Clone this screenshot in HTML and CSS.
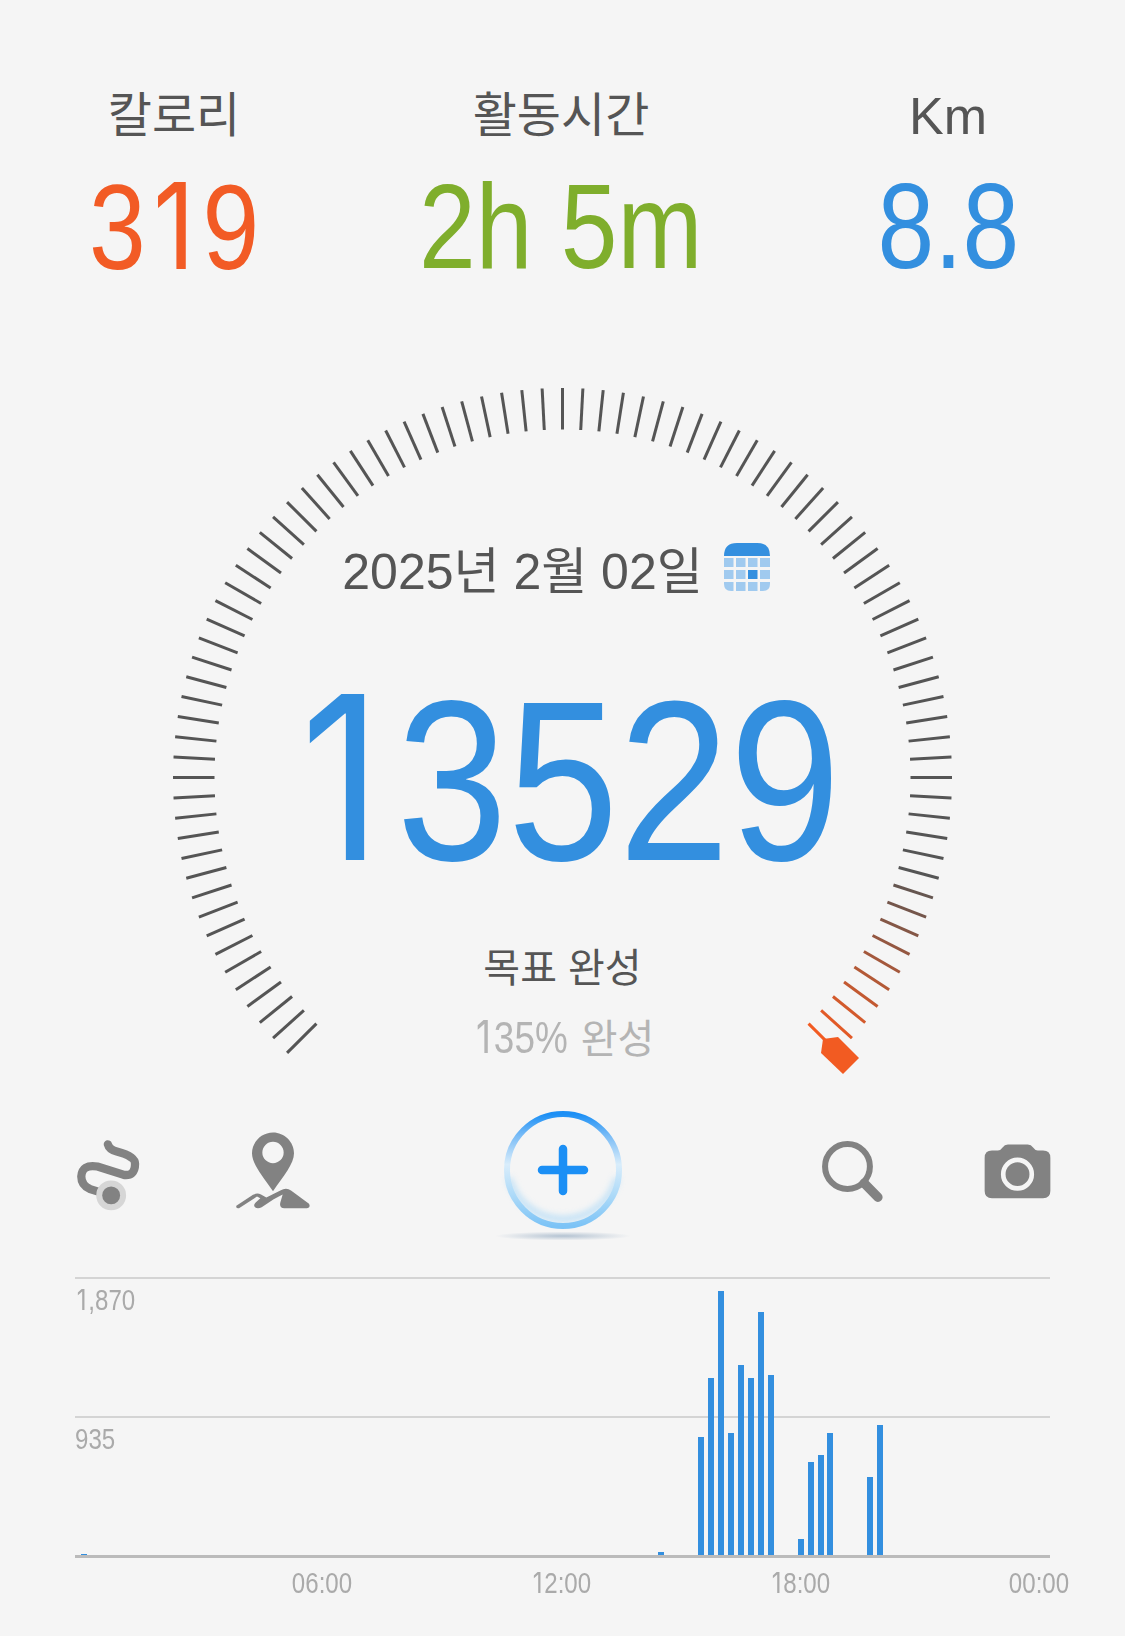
FILE: index.html
```html
<!DOCTYPE html>
<html lang="ko">
<head>
    <meta charset="UTF-8">
    <meta name="viewport" content="width=device-width, initial-scale=1.0">
    <title>걸음 수</title>
    <link rel="stylesheet" href="styles.css">
</head>
<body>
    <section class="stats">
        <div class="stat">
            <div class="stat-label">칼로리</div>
            <div class="stat-value calories">3<span class="one">1</span>9</div>
        </div>
        <div class="stat">
            <div class="stat-label">활동시간</div>
            <div class="stat-value active-time">2h 5m</div>
        </div>
        <div class="stat">
            <div class="stat-label latin">Km</div>
            <div class="stat-value distance">8.8</div>
        </div>
    </section>

    <section class="gauge">
        <svg class="gauge-dial" width="1125" height="710" viewBox="0 380 1125 710">
            <g id="ticks"></g>
            <polygon class="gauge-tag" points="823,1039 838,1037 859,1058 843,1074 821,1053"/>
        </svg>
        <div class="gauge-date">
            <span>2025년 2월 02일</span>
            <svg class="calendar-icon" width="46" height="48" viewBox="0 0 46 48">
                <path class="cal-head" d="M0 13 Q0 0 13 0 H33 Q46 0 46 13 Z"/>
                <path class="cal-cell" d="M0 15 H9.5 V24 H0 Z M12 15 H21.5 V24 H12 Z M24 15 H33.5 V24 H24 Z M36 15 H46 V24 H36 Z"/>
                <path class="cal-cell" d="M0 27 H9.5 V36 H0 Z M12 27 H21.5 V36 H12 Z M36 27 H46 V36 H36 Z"/>
                <rect class="cal-today" x="24" y="27" width="9.5" height="9"/>
                <path class="cal-cell" d="M0 39 H9.5 V48 H7 Q0 48 0 41 Z M12 39 H21.5 V48 H12 Z M24 39 H33.5 V48 H24 Z M36 39 H46 V41 Q46 48 39 48 H36 Z"/>
            </svg>
        </div>
        <div class="gauge-steps"><span class="one">1</span>3529</div>
        <div class="gauge-goal">목표 완성</div>
        <div class="gauge-percent"><span class="percent-num"><span class="one">1</span>35%</span> 완성</div>
    </section>

    <section class="toolbar">
        <div class="tool">
            <svg width="73" height="87" viewBox="35 80 220 260">
                <path class="icon-line" d="M143 131 Q147 147 170 153 Q225 167 225 190 Q225 228 190 223 L112 198 Q65 190 63 228 Q63 255 90 266 L150 285"/>
                <circle class="icon-halo" cx="153" cy="285" r="45"/>
                <circle class="icon-fill" cx="153" cy="285" r="27"/>
            </svg>
        </div>
        <div class="tool">
            <svg width="80" height="87" viewBox="518 80 240 260">
                <path class="icon-fill" fill-rule="evenodd" d="M638 96 C672 96 701 124 701 158 C701 190 670 225 638 272 C606 225 575 190 575 158 C575 124 604 96 638 96 Z M638 124 A32 32 0 1 0 638 188 A32 32 0 1 0 638 124 Z"/>
                <path class="icon-fill" d="M528 316 L578 283 Q590 276 602 282 L618 291 L660 270 Q678 260 692 270 L746 310 Q752 322 740 323 H672 Q656 322 660 306 L667 282 L640 296 L604 320 Q592 326 584 320 Q578 314 586 306 L600 293 L590 288 L536 323 Q526 324 528 316 Z"/>
            </svg>
        </div>
        <div class="tool">
            <svg width="160" height="160" viewBox="0 0 160 160">
                <defs>
                    <linearGradient id="ringGrad" x1="0" y1="0" x2="0" y2="1">
                        <stop offset="0" stop-color="#1b8ff5"/>
                        <stop offset="0.2" stop-color="#7cbdf6"/>
                        <stop offset="0.45" stop-color="#d9edfb"/>
                        <stop offset="0.75" stop-color="#a9d8f8"/>
                        <stop offset="1" stop-color="#7cc3f6"/>
                    </linearGradient>
                    <radialGradient id="shadowGrad">
                        <stop offset="0" stop-color="#b4c3d2"/>
                        <stop offset="1" stop-color="#f5f5f5"/>
                    </radialGradient>
                    <filter id="soft" x="-20%" y="-20%" width="140%" height="140%">
                        <feGaussianBlur stdDeviation="0.6"/>
                    </filter>
                    <filter id="glow" x="-30%" y="-30%" width="160%" height="160%">
                        <feGaussianBlur stdDeviation="3"/>
                    </filter>
                </defs>
                <ellipse cx="80" cy="146" rx="68" ry="4.5" fill="url(#shadowGrad)"/>
                <path class="plus-glow" d="M26 88 A56 56 0 0 0 134 88" filter="url(#glow)"/>
                <circle class="plus-ring" cx="80" cy="80" r="56" filter="url(#soft)"/>
                <path class="plus-mark" d="M80 59 V101 M59 80 H101"/>
            </svg>
        </div>
        <div class="tool">
            <svg width="67" height="87" viewBox="57 50 200 260">
                <circle class="icon-stroke" cx="142" cy="168" r="67"/>
                <path class="icon-handle" d="M192 218 L233 260"/>
            </svg>
        </div>
        <div class="tool">
            <svg width="73" height="87" viewBox="541 50 220 260">
                <path class="icon-fill" d="M574 120 H592 Q600 120 606 111 Q612 102 622 102 H682 Q692 102 698 111 Q704 120 712 120 H728 Q750 120 750 142 V242 Q750 264 728 264 H574 Q552 264 552 242 V142 Q552 120 574 120 Z"/>
                <circle class="icon-lens" cx="651" cy="191" r="43"/>
            </svg>
        </div>
    </section>

    <section class="chart">
        <div class="chart-row"><span class="chart-label"><span class="one">1</span>,870</span></div>
        <div class="chart-row"><span class="chart-label">935</span></div>
        <div class="chart-bars" id="bars"></div>
    </section>
    <div class="chart-times">
        <span>06:00</span>
        <span><span class="one">1</span>2:00</span>
        <span><span class="one">1</span>8:00</span>
        <span>00:00</span>
    </div>

    <script src="script.js"></script>
</body>
</html>
```

FILE: styles.css
```css
* {
    margin: 0;
    padding: 0;
    box-sizing: border-box;
}

body {
    width: 1125px;
    height: 1636px;
    overflow: hidden;
    background: #f5f5f5;
    color: #555;
    font-family: 'Liberation Sans', 'Noto Sans CJK KR', sans-serif;
}

/* Liberation's 1 has a foot, the design's doesn't */
.one {
    display: inline-block;
    width: 0.556em;
    font-family: Inter, sans-serif;
    text-align: center;
}

/* Top stats */
.stats {
    display: flex;
    justify-content: space-between;
    height: 380px;
    padding: 86px 27px 0 24px;
}

.stat {
    display: flex;
    flex-direction: column;
    align-items: center;
    width: 300px;
}

.stat-label {
    font-size: 48px;
    line-height: 60px;
}

.stat-label.latin {
    font-size: 52px;
}

/* No narrow face is installed, so the digits are squeezed */
.stat-value {
    margin-top: 10px;
    font-size: 120px;
    line-height: 140px;
    white-space: nowrap;
    transform: scaleX(0.85);
}

.calories { color: #f25b25; }
.active-time { color: #7fae2c; }
.distance { color: #338fdf; }

/* Gauge */
.gauge {
    position: relative;
    display: flex;
    flex-direction: column;
    align-items: center;
    height: 710px;
    padding-top: 157px;
}

.gauge-dial {
    position: absolute;
    top: 0;
    left: 0;
}

.gauge-tag {
    fill: #f25b22;
}

.gauge-date {
    position: relative;
    display: flex;
    align-items: center;
    gap: 21px;
    height: 60px;
    margin-left: -13px;
    font-size: 50px;
}

.cal-head, .cal-today { fill: #338fdf; }
.cal-cell { fill: #a0caef; }

.gauge-steps {
    position: relative;
    margin-top: 60px;
    height: 240px;
    font-size: 228px;
    line-height: 240px;
    color: #338fdf;
    transform: scaleX(0.875);
}

.gauge-goal {
    position: relative;
    margin-top: 46px;
    font-size: 40px;
    line-height: 50px;
}

.gauge-percent {
    position: relative;
    margin-top: 19px;
    font-size: 40px;
    line-height: 50px;
    color: #b4b4b4;
}

.percent-num {
    display: inline-block;
    font-size: 45px;
    transform: scaleX(0.82);
    margin: 0 -8px;
}

/* Toolbar */
.toolbar {
    display: grid;
    grid-template-columns: 160px 170px 409px 170px 160px;
    align-items: center;
    height: 158px;
    padding-left: 28px;
}

.tool {
    display: flex;
    justify-content: center;
}

.icon-fill { fill: #828282; }
.icon-halo { fill: #d6d6d6; }

.icon-line {
    fill: none;
    stroke: #828282;
    stroke-width: 25;
    stroke-linecap: round;
}

.icon-stroke {
    fill: none;
    stroke: #828282;
    stroke-width: 18;
}

.icon-handle {
    fill: none;
    stroke: #828282;
    stroke-width: 28;
    stroke-linecap: round;
}

.icon-lens {
    fill: none;
    stroke: #f5f5f5;
    stroke-width: 14;
}

.plus-ring {
    fill: none;
    stroke: url(#ringGrad);
    stroke-width: 6;
}

.plus-glow {
    fill: none;
    stroke: #9ad2f8;
    stroke-width: 6;
    opacity: 0.6;
}

.plus-mark {
    fill: none;
    stroke: #1b8ff5;
    stroke-width: 8.5;
    stroke-linecap: round;
}

/* Step chart */
.chart {
    position: relative;
    width: 975px;
    margin: 29px 0 0 75px;
    border-bottom: 3px solid #bbb;
}

.chart-row {
    height: 139px;
    border-top: 2px solid #d4d4d4;
    padding-top: 4px;
}

.chart-label {
    display: inline-block;
    font-size: 29px;
    line-height: 34px;
    color: #aaa;
    transform: scaleX(0.83);
    transform-origin: left center;
}

.chart-bars {
    position: absolute;
    left: 4px;
    bottom: 0;
    display: flex;
    align-items: flex-end;
    width: 956px;
    height: 270px;
}

.chart-slot {
    flex: 1;
    display: flex;
    justify-content: center;
}

.chart-bar {
    width: 6px;
    background: #338fdf;
}

.chart-times {
    display: flex;
    gap: 165px;
    margin-top: 10px;
    padding-left: 285px;
    font-size: 29px;
    line-height: 30px;
    color: #aaa;
}

.chart-times > span {
    flex: none;
    width: 74px;
    text-align: center;
    transform: scaleX(0.83);
}
```

FILE: script.js
```js
// Gauge ticks: one mark every 3 degrees over 270 degrees, the last ones fade to orange
const ticksGroup = document.getElementById('ticks');
const cx = 562.5, cy = 777.5, outer = 389.5, inner = 348;
const tickCount = 91;

function tickColor(i) {
    const t = Math.max(0, (i - (tickCount - 11)) / 10);
    const r = Math.round(85 + (242 - 85) * t);
    const g = Math.round(85 + (91 - 85) * t);
    const b = Math.round(85 + (34 - 85) * t);
    return `rgb(${r},${g},${b})`;
}

for (let i = 0; i < tickCount; i++) {
    const a = (-135 + i * 3) * Math.PI / 180;
    const line = document.createElementNS('http://www.w3.org/2000/svg', 'line');
    line.setAttribute('x1', cx + Math.sin(a) * inner);
    line.setAttribute('y1', cy - Math.cos(a) * inner);
    line.setAttribute('x2', cx + Math.sin(a) * outer);
    line.setAttribute('y2', cy - Math.cos(a) * outer);
    line.setAttribute('stroke', tickColor(i));
    line.setAttribute('stroke-width', '3');
    ticksGroup.appendChild(line);
}

// Steps per 15 minutes, height in px by slot index
const steps = {
    0: 1, 58: 3, 62: 118, 63: 177, 64: 264, 65: 122, 66: 190, 67: 177, 68: 243, 69: 180,
    72: 16, 73: 93, 74: 100, 75: 122, 79: 78, 80: 130
};

const barsEl = document.getElementById('bars');
for (let i = 0; i < 96; i++) {
    const slot = document.createElement('div');
    slot.className = 'chart-slot';
    if (steps[i]) {
        const bar = document.createElement('div');
        bar.className = 'chart-bar';
        bar.style.height = steps[i] + 'px';
        slot.appendChild(bar);
    }
    barsEl.appendChild(slot);
}
```
